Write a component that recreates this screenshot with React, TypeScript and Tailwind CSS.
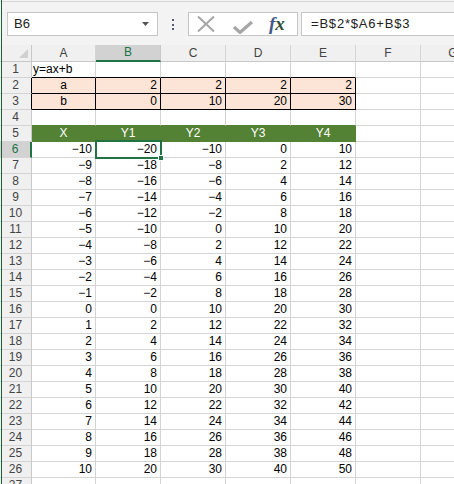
import React from "react";

const font = { fontFamily: '"Liberation Sans", Arial, sans-serif' };

const colLetters = ["A", "B", "C", "D", "E", "F", "G"];
const gridCols = "grid grid-cols-[32px_64px_65px_65px_65px_65px_65px_65px]";

const fmt = (n: number) => (n < 0 ? "\u2212" + Math.abs(n) : String(n));

type CellProps = {
  text?: string;
  align?: "left" | "right" | "center";
  cls?: string;
  children?: React.ReactNode;
};

const Cell = ({ text, align = "right", cls = "", children }: CellProps) => {
  const a =
    align === "left"
      ? "text-left pl-[1px]"
      : align === "center"
        ? "text-center"
        : "text-right pr-[3px]";
  return (
    <div
      className={`relative border-r border-b whitespace-nowrap text-[12px] leading-[15px] ${a} ${
        cls || "border-[#d4d4d4] bg-white text-black"
      }`}
    >
      {text}
      {children}
    </div>
  );
};

const RowHead = ({ n, cls = "" }: { n: number; cls?: string }) => (
  <div
    className={`border-b border-[#d4d4d4] text-center text-[12px] leading-[15px] ${
      cls || "bg-[#f0f0f0] text-[#444] border-r border-r-[#c8c8c8]"
    }`}
  >
    {n}
  </div>
);

const Toolbar = () => (
  <div className="h-[45px] bg-[#f3f3f3]">
    <div className="h-[1px]" />
    <div className="h-[1px] bg-[#d6d6d6]" />
    <div className="flex items-start pt-[10px]">
      <div className="ml-[7px] w-[151px] h-[24px] bg-white border border-[#c6c6c6] flex items-center">
        <span className="pl-[6px] text-[13px] text-[#222] flex-1">B6</span>
        <svg width="7" height="4" viewBox="0 0 7 4" className="mr-[8px]">
          <path d="M0 0 H7 L3.5 4 Z" fill="#555" />
        </svg>
      </div>
      <div className="ml-[14px] mt-[7px] flex flex-col gap-[2.5px]">
        <div className="w-[2px] h-[2px] bg-[#55587a]" />
        <div className="w-[2px] h-[2px] bg-[#55587a]" />
        <div className="w-[2px] h-[2px] bg-[#55587a]" />
      </div>
      <div className="ml-[14px] w-[110px] h-[24px] bg-white border border-[#c6c6c6] flex items-center">
        <svg width="18" height="16" viewBox="0 0 18 16" className="ml-[8px]">
          <path d="M1 0.5 L17 15.5 M17 0.5 L1 15.5" stroke="#a6a6a6" strokeWidth="2" />
        </svg>
        <svg width="20" height="13" viewBox="0 0 20 13" className="ml-[18px] mt-[6px]">
          <path d="M1 6 L7 11.5 L19 1" stroke="#a6a6a6" strokeWidth="3.2" fill="none" />
        </svg>
        <span
          className="ml-[16px] text-[19px] italic font-bold leading-none -mt-[2px]"
          style={{ fontFamily: '"Liberation Serif", "Times New Roman", serif' }}
        >
          <span className="text-[#3f5a8a]">f</span>
          <span className="text-[#2f4f3a]">x</span>
        </span>
      </div>
      <div className="ml-[3px] flex-1 h-[24px] bg-white border-y border-l border-[#c6c6c6] flex items-center">
        <span className="pl-[9px] text-[13px] tracking-[0.8px] text-[#222]">=B$2*$A6+B$3</span>
      </div>
    </div>
  </div>
);

const Header = () => (
  <div className={`${gridCols} h-[17px]`}>
    <div className="relative bg-[#f0f0f0] border-r border-b border-[#c8c8c8]">
      <svg width="9" height="9" viewBox="0 0 9 9" className="absolute right-[3px] bottom-[3px]">
        <path d="M9 0 V9 H0 Z" fill="#d0d0d0" />
      </svg>
    </div>
    {colLetters.map((c) =>
      c === "B" ? (
        <div
          key={c}
          className="bg-[#d2d2d2] text-[#217346] text-center text-[12px] leading-[15px] border-r border-[#c8c8c8] border-b-2 border-b-[#217346]"
        >
          {c}
        </div>
      ) : (
        <div
          key={c}
          className="bg-[#f0f0f0] text-[#444] text-center text-[12px] leading-[16px] border-r border-b border-[#d4d4d4] border-b-[#c8c8c8]"
        >
          {c}
        </div>
      ),
    )}
  </div>
);

const peach = "border-black bg-[#fce4d6] text-black";
const green = "border-[#548235] bg-[#548235] text-white";

export default function App() {
  const xs = Array.from({ length: 21 }, (_, i) => i - 10);

  return (
    <div className="relative w-[454px] h-[484px] overflow-hidden bg-white" style={font}>
      <Toolbar />
      <Header />
      <div className="flex flex-col">
        {/* row 1 */}
        <div className={`${gridCols} h-[16px]`}>
          <RowHead n={1} />
          <Cell text="y=ax+b" align="left" cls="border-[#d4d4d4] border-b-black bg-white text-black" />
          <Cell cls="border-[#d4d4d4] border-b-black bg-white" />
          <Cell cls="border-[#d4d4d4] border-b-black bg-white" />
          <Cell cls="border-[#d4d4d4] border-b-black bg-white" />
          <Cell cls="border-[#d4d4d4] border-b-black bg-white" />
          <Cell />
          <Cell />
        </div>
        {/* rows 2-3 */}
        {[
          { n: 2, label: "a", vals: [2, 2, 2, 2] },
          { n: 3, label: "b", vals: [0, 10, 20, 30] },
        ].map((r) => (
          <div key={r.n} className={`${gridCols} h-[16px]`}>
            <RowHead n={r.n} cls="bg-[#f0f0f0] text-[#444] border-r border-r-black" />
            <Cell text={r.label} align="center" cls={peach} />
            {r.vals.map((v, i) => (
              <Cell key={i} text={fmt(v)} cls={peach} />
            ))}
            <Cell />
            <Cell />
          </div>
        ))}
        {/* row 4 */}
        <div className={`${gridCols} h-[16px]`}>
          <RowHead n={4} />
          <Cell cls="border-[#d4d4d4] border-b-[#548235] bg-white" />
          <Cell cls="border-[#d4d4d4] border-b-[#548235] bg-white" />
          <Cell cls="border-[#d4d4d4] border-b-[#548235] bg-white" />
          <Cell cls="border-[#d4d4d4] border-b-[#548235] bg-white" />
          <Cell cls="border-[#d4d4d4] border-b-[#548235] bg-white" />
          <Cell />
          <Cell />
        </div>
        {/* row 5 */}
        <div className={`${gridCols} h-[16px]`}>
          <RowHead n={5} />
          {["X", "Y1", "Y2", "Y3", "Y4"].map((h) => (
            <Cell key={h} text={h} align="center" cls={green} />
          ))}
          <Cell />
          <Cell />
        </div>
        {/* data rows */}
        {xs.map((x, i) => {
          const n = i + 6;
          const sel = n === 6;
          return (
            <div key={n} className={`${gridCols} h-[16px]`}>
              {sel ? (
                <RowHead
                  n={n}
                  cls="bg-[#d2d2d2] text-[#217346] border-r-2 border-r-[#217346]"
                />
              ) : (
                <RowHead n={n} />
              )}
              <Cell text={fmt(x)} />
              <Cell text={fmt(2 * x)} cls={sel ? "z-10 border-[#d4d4d4] bg-white text-black" : ""}>
                {sel && (
                  <>
                    <div className="absolute left-[-1px] top-[-2px] w-[67px] h-[19px] border-2 border-[#217346]" />
                    <div className="absolute left-[62px] top-[13px] w-[6px] h-[6px] bg-[#217346] border border-white" />
                  </>
                )}
              </Cell>
              <Cell text={fmt(2 * x + 10)} />
              <Cell text={fmt(2 * x + 20)} />
              <Cell text={fmt(2 * x + 30)} />
              <Cell />
              <Cell />
            </div>
          );
        })}
        {/* row 27 */}
        <div className={`${gridCols} h-[16px]`}>
          <RowHead n={27} />
          <Cell />
          <Cell />
          <Cell />
          <Cell />
          <Cell />
          <Cell />
          <Cell />
        </div>
      </div>
      <div className="absolute left-[1px] top-0 w-[1px] h-full bg-[#1f5f3a]" />
    </div>
  );
}
